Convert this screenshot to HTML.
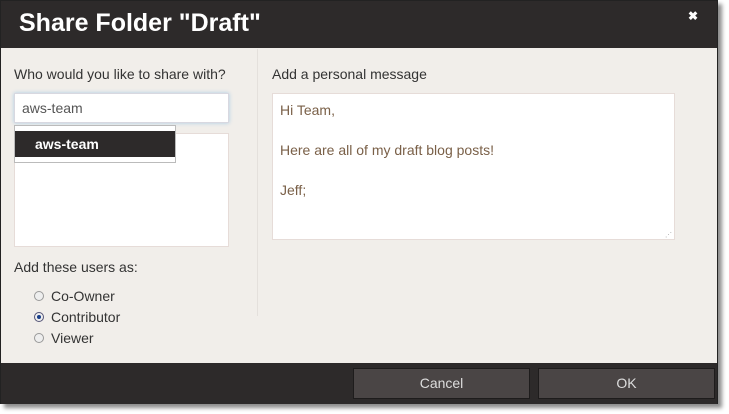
<!DOCTYPE html>
<html><head><style>
body{margin:0;width:729px;height:414px;background:#fff;font-family:"Liberation Sans",sans-serif;position:relative;overflow:hidden}
.dlg{position:absolute;left:0;top:0;width:718px;height:404px;box-sizing:border-box;background:#f1eeea;border:1px solid #222;box-shadow:4px 4px 4px rgba(0,0,0,.45)}
.hd{position:absolute;left:0;top:0;width:716px;height:47px;background:#2d2a2a}
.hd h1{margin:0;position:absolute;left:18px;top:8px;font-size:25px;font-weight:bold;color:#fff}
.x{position:absolute;left:687px;top:8px;color:#fff;font-size:12px;font-weight:bold}
.ft{position:absolute;left:0;top:362px;width:716px;height:41px;background:#2d2a2a}
.btn{position:absolute;top:5px;height:29px;background:#4a4545;border:1px solid #1e1c1c;color:#ddd;font-size:14px;text-align:center;line-height:29px}
.lbl{position:absolute;font-size:14px;color:#333}
.box{position:absolute;background:#fff;border:1px solid #e6dcd8}
.ta{color:#7a6048;font-size:14px}
.r{position:absolute;left:33px;width:10px;height:10px;border-radius:50%;border:1px solid #999;background:#eee;box-sizing:border-box}
</style></head><body>
<div class="dlg">
<div class="hd"><h1>Share Folder "Draft"</h1><div class="x">✖</div></div>
<div style="position:absolute;left:256px;top:48px;width:1px;height:267px;background:#e4e0dc"></div>
<div class="lbl" style="left:13px;top:65px">Who would you like to share with?</div>
<div class="box" style="left:13px;top:92px;width:213px;height:28px;box-shadow:0 0 4px #a9cbe6;border-color:#d8d8e0"><span style="position:absolute;left:7px;top:6px;font-size:14px;color:#555">aws-team</span></div>
<div class="box" style="left:13px;top:132px;width:213px;height:112px"></div>
<div style="position:absolute;left:13px;top:124px;width:160px;height:36px;background:#fff;border:1px solid #bbb"><div style="position:absolute;left:0;top:5px;width:160px;height:26px;background:#2d2a2a;color:#fff;font-weight:bold;font-size:14px;line-height:26px;padding-left:20px;box-sizing:border-box">aws-team</div></div>
<div class="lbl" style="left:13px;top:258px">Add these users as:</div>
<div class="r" style="top:290px"></div><div class="lbl" style="left:50px;top:287px">Co-Owner</div>
<div class="r" style="top:311px;border-color:#557"><div style="position:absolute;left:2px;top:2px;width:4px;height:4px;border-radius:50%;background:#1a3f8a"></div></div><div class="lbl" style="left:50px;top:308px">Contributor</div>
<div class="r" style="top:332px"></div><div class="lbl" style="left:50px;top:329px">Viewer</div>
<div class="lbl" style="left:271px;top:65px">Add a personal message</div>
<div class="box ta" style="left:271px;top:92px;width:401px;height:145px"><div style="position:absolute;left:7px;top:6px;line-height:20px">Hi Team,<br><br>Here are all of my draft blog posts!<br><br>Jeff;</div><span style="position:absolute;right:2px;bottom:0;font-size:7px;color:#aaa">⋰</span></div>
<div class="ft"><div class="btn" style="left:352px;width:175px">Cancel</div><div class="btn" style="left:537px;width:175px">OK</div></div>
</div>
</body></html>
